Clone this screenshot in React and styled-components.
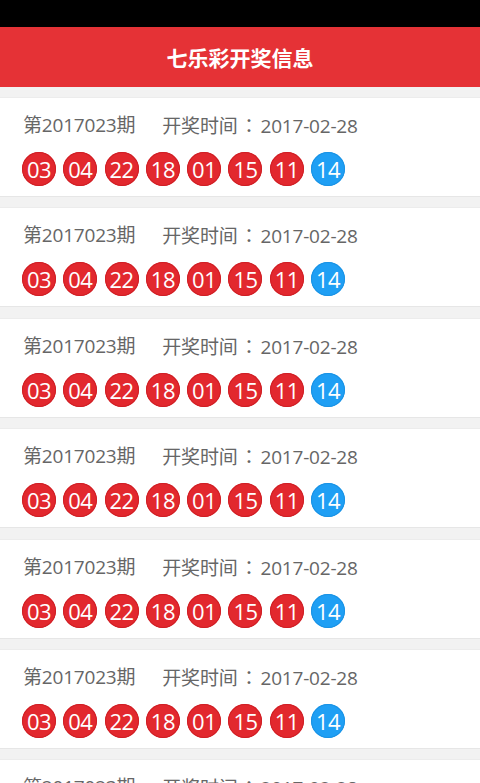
import React from 'react'
import styled, { createGlobalStyle } from 'styled-components'

const GlobalStyle = createGlobalStyle`
  * { box-sizing: border-box; }
  body {
    margin: 0;
    background: #f2f2f2;
    font-family: "Open Sans", "Noto Sans CJK SC", sans-serif;
  }
`

const draws = Array.from({ length: 7 }, (_, i) => ({
  id: i,
  issue: `2017023`,
  date: `2017-02-28`,
  reds: [`03`, `04`, `22`, `18`, `01`, `15`, `11`],
  blue: `14`,
}))

export default function App() {
  return (
    <Page>
      <GlobalStyle />
      <StatusBar />
      <Header>七乐彩开奖信息</Header>
      <List>
        {draws.map(draw => (
          <Card key={draw.id}>
            <Info>
              <span>第{draw.issue}期</span>
              <span>
                开奖时间<Colon>：</Colon>
                {draw.date}
              </span>
            </Info>
            <Balls>
              {draw.reds.map((n, j) => (
                <Ball key={j}>{n}</Ball>
              ))}
              <Ball blue>{draw.blue}</Ball>
            </Balls>
          </Card>
        ))}
      </List>
    </Page>
  )
}

const Page = styled.div`
  width: 480px;
`
const StatusBar = styled.div`
  height: 27px;
  background: #000;
`
const Header = styled.header`
  height: 60px;
  background: #e53236;
  color: #fff;
  font-size: 21px;
  font-weight: bold;
  display: flex;
  align-items: center;
  justify-content: center;
`
const List = styled.ul`
  list-style: none;
  margin: 0;
  padding: 10px 0 0;
  display: flex;
  flex-direction: column;
  gap: 10.4px;
`
const Card = styled.li`
  height: 100px;
  background: #fff;
  border-top: 1px solid #ececec;
  border-bottom: 1px solid #e6e6e6;
  padding: 14px 0 0 23px;
`
const Info = styled.div`
  display: flex;
  gap: 27px;
  color: #666;
  font-size: 19px;
  line-height: 26px;
  white-space: nowrap;
  letter-spacing: -0.2px;
`
const Colon = styled.span`
  font-family: "Noto Sans CJK TC", sans-serif;
  display: inline-block;
  width: 23px;
  text-align: center;
`
const Balls = styled.div`
  display: flex;
  gap: 7.3px;
  margin-top: 13px;
  margin-left: -1px;
`
const Ball = styled.span`
  width: 34px;
  height: 34px;
  border-radius: 50%;
  background: ${({ blue }) => (blue ? `#1f9ff4` : `#e2282e`)};
  box-shadow: inset 0 0 0 1px ${({ blue }) => (blue ? `#1a92e4` : `#cf1f25`)};
  color: #fff;
  font-size: 22px;
  letter-spacing: -0.5px;
  display: flex;
  align-items: center;
  justify-content: center;
`
